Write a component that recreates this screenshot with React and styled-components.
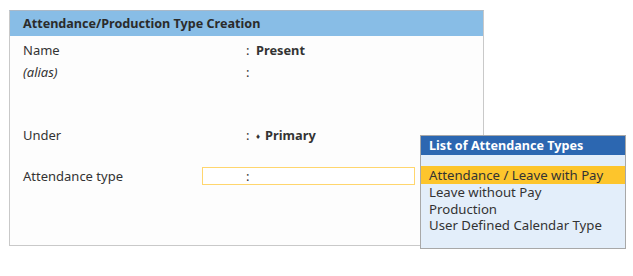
import React from "react";
import styled, { createGlobalStyle } from "styled-components";

const Global = createGlobalStyle`
  html, body { margin: 0; padding: 0; background: #ffffff; }
  body { font-family: "Noto Sans", "Open Sans", sans-serif; color: #333; }
`;

const Page = styled.div`
  position: relative;
  width: 633px;
  height: 276px;
  padding: 10px 0 0 9px;
  box-sizing: border-box;
`;

const Panel = styled.section`
  width: 475px;
  height: 236px;
  box-sizing: border-box;
  border: 1px solid #c9c9c9;
  border-top-color: #a9b9c9;
  background: #fdfdfd;
`;

const PanelHeader = styled.header`
  height: 25px;
  background: #88bde6;
  display: flex;
  align-items: center;
  padding-left: 13px;
  font-weight: 700;
  font-size: 12.6px;
  color: #2b2b2b;
`;

const Body = styled.div`
  padding: 4px 0 0 13px;
  display: flex;
  flex-direction: column;
`;

const Row = styled.div`
  display: grid;
  grid-template-columns: 179px 213px;
  height: 20px;
  align-items: center;
  font-size: 13px;
  margin-top: ${(p) => p.$gap || 0}px;
`;

const Label = styled.span`
  font-style: ${(p) => (p.$italic ? "italic" : "normal")};
`;

const Field = styled.div`
  display: flex;
  align-items: center;
  height: 18px;
  box-sizing: border-box;
  padding-left: 43px;
  border: 1px solid ${(p) => (p.$active ? "#ffd66e" : "transparent")};
  background: ${(p) => (p.$active ? "#ffffff" : "transparent")};
`;

const Colon = styled.span`
  width: 10px;
`;

const Value = styled.span`
  font-weight: 700;
  font-size: 12.8px;
  display: flex;
  align-items: center;
  gap: 5px;
`;

const Diamond = styled.span`
  font-size: 8px;
  font-weight: 400;
`;

const Popup = styled.div`
  position: absolute;
  left: 420px;
  top: 135px;
  width: 206px;
  height: 114px;
  box-sizing: border-box;
  border: 1px solid #a8a8a8;
  background: #e3eefa;
  display: flex;
  flex-direction: column;
`;

const PopupHeader = styled.div`
  height: 19px;
  background: #2c67b1;
  color: #ffffff;
  font-weight: 700;
  font-size: 12.6px;
  display: flex;
  align-items: center;
  padding-left: 8px;
`;

const List = styled.ul`
  list-style: none;
  margin: 11px 0 0 0;
  padding: 0;
`;

const Item = styled.li`
  height: 16.5px;
  display: flex;
  align-items: center;
  padding-left: 8px;
  font-size: 13.2px;
  color: #333;
  background: ${(p) => (p.$selected ? "#fdc52c" : "transparent")};
  ${(p) => p.$selected && "height: 18px;"}
`;

export default function App() {
  return (
    <>
      <Global />
      <Page>
        <Panel>
          <PanelHeader>Attendance/Production Type Creation</PanelHeader>
          <Body>
            <Row>
              <Label>Name</Label>
              <Field>
                <Colon>:</Colon>
                <Value>Present</Value>
              </Field>
            </Row>
            <Row $gap={2}>
              <Label $italic>(alias)</Label>
              <Field>
                <Colon>:</Colon>
              </Field>
            </Row>
            <Row $gap={43}>
              <Label>Under</Label>
              <Field>
                <Colon>:</Colon>
                <Value>
                  <Diamond>♦</Diamond>Primary
                </Value>
              </Field>
            </Row>
            <Row $gap={21}>
              <Label>Attendance type</Label>
              <Field $active>
                <Colon>:</Colon>
              </Field>
            </Row>
          </Body>
        </Panel>
        <Popup>
          <PopupHeader>List of Attendance Types</PopupHeader>
          <List>
            <Item $selected>Attendance / Leave with Pay</Item>
            <Item>Leave without Pay</Item>
            <Item>Production</Item>
            <Item>User Defined Calendar Type</Item>
          </List>
        </Popup>
      </Page>
    </>
  );
}
